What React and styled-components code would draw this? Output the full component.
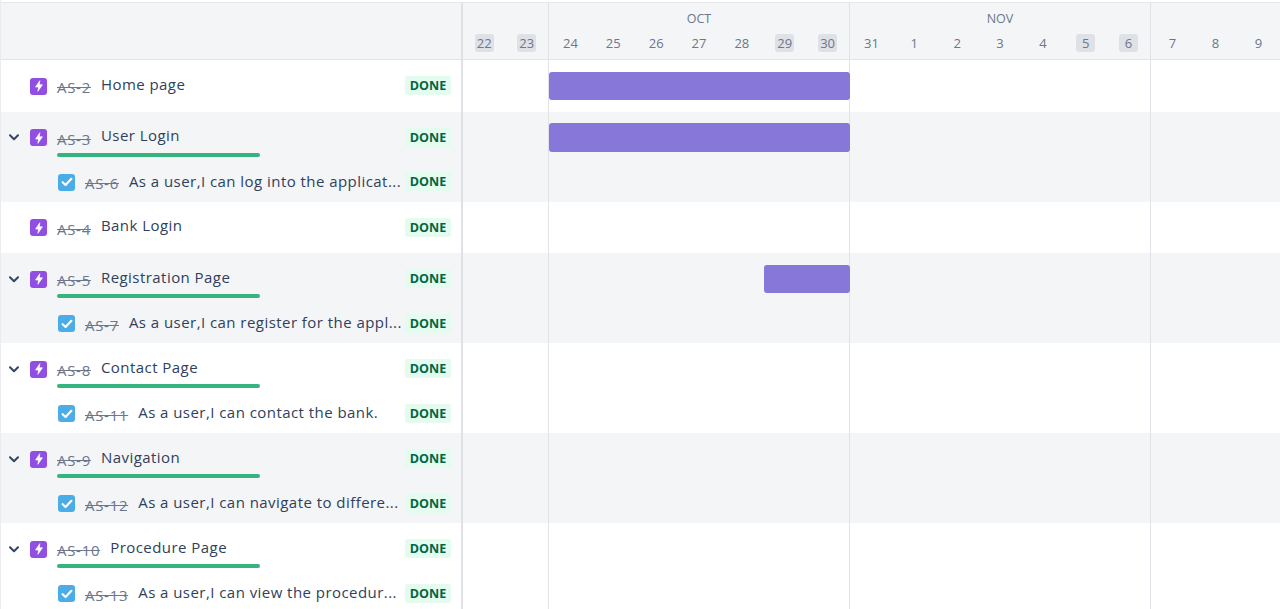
import styled, { createGlobalStyle } from "styled-components";

const months = [
  { label: "", days: [22, 23] },
  { label: "OCT", days: [24, 25, 26, 27, 28, 29, 30] },
  { label: "NOV", days: [31, 1, 2, 3, 4, 5, 6] },
  { label: "", days: [7, 8, 9] },
];
const weekend = [22, 23, 29, 30, 5, 6];

const epics = [
  { id: "AS-2", title: "Home page", bar: { start: 0, days: 7 } },
  {
    id: "AS-3",
    title: "User Login",
    shaded: true,
    bar: { start: 0, days: 7 },
    child: { id: "AS-6", title: "As a user,I can log into the applicat..." },
  },
  { id: "AS-4", title: "Bank Login" },
  {
    id: "AS-5",
    title: "Registration Page",
    shaded: true,
    bar: { start: 5, days: 2 },
    child: { id: "AS-7", title: "As a user,I can register for the appl..." },
  },
  {
    id: "AS-8",
    title: "Contact Page",
    child: { id: "AS-11", title: "As a user,I can contact the bank." },
  },
  {
    id: "AS-9",
    title: "Navigation",
    shaded: true,
    child: { id: "AS-12", title: "As a user,I can navigate to differe..." },
  },
  {
    id: "AS-10",
    title: "Procedure Page",
    child: { id: "AS-13", title: "As a user,I can view the procedur..." },
  },
];

const DAY = 43;

const EpicIcon = () => (
  <EpicBox>
    <svg width="10" height="12" viewBox="0 0 10 12">
      <path d="M5.8 0.7 1.6 7H4.6L3.9 11.3 8.4 4.8H5.3Z" fill="#fff" stroke="#fff" strokeWidth="0.7" strokeLinejoin="round" />
    </svg>
  </EpicBox>
);

const TaskIcon = () => (
  <TaskBox>
    <svg width="12" height="10" viewBox="0 0 12 10">
      <path d="M1.6 5.2 4.6 8 10.4 1.8" fill="none" stroke="#fff" strokeWidth="2.2" strokeLinecap="round" strokeLinejoin="round" />
    </svg>
  </TaskBox>
);

const Chevron = () => (
  <svg width="10" height="7" viewBox="0 0 10 7">
    <path d="M1 1.2 5 5.2 9 1.2" fill="none" stroke="#344563" strokeWidth="2" strokeLinecap="round" strokeLinejoin="round" />
  </svg>
);

const Lines = ({ bar }) => (
  <Lane>
    <WeekCell />
    <WeekCell>
      {bar && <Bar $start={bar.start} $days={bar.days} />}
    </WeekCell>
    <WeekCell />
    <WeekCell $last />
  </Lane>
);

const App = () => (
  <Page>
    <GlobalStyle />
    <Header>
      <SideHead />
      <Lane>
        {months.map((m, i) => (
          <MonthCell key={i} $last={i === months.length - 1}>
            <MonthLabel>{m.label}</MonthLabel>
            <Days>
              {m.days.map((d) => (
                <DaySlot key={d}>
                  <DayNum $weekend={weekend.includes(d)}>{d}</DayNum>
                </DaySlot>
              ))}
            </Days>
          </MonthCell>
        ))}
      </Lane>
    </Header>
    {epics.map((e) => (
      <Group key={e.id} $shaded={e.shaded}>
        <Side>
          <ParentRow>
            <Main>
              <Toggle>{e.child && <Chevron />}</Toggle>
              <EpicIcon />
              <Key>{e.id}</Key>
              <ParentTitle>{e.title}</ParentTitle>
              <Status>DONE</Status>
            </Main>
            {e.child && <Progress />}
          </ParentRow>
          {e.child && (
            <ChildRow>
              <TaskIcon />
              <Key>{e.child.id}</Key>
              <Title>{e.child.title}</Title>
              <Status>DONE</Status>
            </ChildRow>
          )}
        </Side>
        <Lines bar={e.bar} />
      </Group>
    ))}
  </Page>
);

const GlobalStyle = createGlobalStyle`
  html, body {
    margin: 0;
    height: 100%;
    overflow: hidden;
    background: #fff;
    font-family: "Open Sans", "Noto Sans", sans-serif;
  }
`;
const Page = styled.div`
  height: 609px;
  overflow: hidden;
  padding-top: 2px;
  box-sizing: border-box;
  border-left: 1px solid #ebecf0;
`;
const Header = styled.div`
  display: flex;
  height: 58px;
  box-sizing: border-box;
  background: #f4f5f7;
  border-top: 1px solid #e6e8ec;
  border-bottom: 1px solid #e1e3e8;
`;
const SideHead = styled.div`
  width: 460px;
  flex-shrink: 0;
  border-right: 2px solid #dfe1e6;
`;
const Lane = styled.div`
  flex: 1;
  display: grid;
  grid-template-columns: ${DAY * 2}px ${DAY * 7}px ${DAY * 7}px 1fr;
`;
const MonthCell = styled.div`
  display: flex;
  flex-direction: column;
  align-items: center;
  border-right: ${(p) => (p.$last ? "none" : "1px solid #e1e3e8")};
`;
const MonthLabel = styled.div`
  height: 24px;
  padding-top: 7px;
  font-size: 12.5px;
  line-height: 17px;
  color: #6b778c;
`;
const Days = styled.div`
  display: flex;
  width: 100%;
`;
const DaySlot = styled.div`
  width: ${DAY}px;
  display: flex;
  justify-content: center;
`;
const DayNum = styled.span`
  min-width: 19px;
  height: 18px;
  line-height: 18px;
  text-align: center;
  font-size: 13px;
  color: #6b778c;
  border-radius: 3px;
  background: ${(p) => (p.$weekend ? "#dfe1e6" : "transparent")};
`;
const Group = styled.div`
  display: flex;
  background: ${(p) => (p.$shaded ? "#f4f5f7" : "#fff")};
`;
const Side = styled.div`
  width: 460px;
  flex-shrink: 0;
  border-right: 2px solid #dfe1e6;
`;
const ParentRow = styled.div`
  height: 51.5px;
  box-sizing: border-box;
  padding-top: 16px;
`;
const Main = styled.div`
  display: flex;
  align-items: center;
  height: 20px;
  padding: 0 10px 0 8px;
`;
const Toggle = styled.div`
  width: 21px;
  flex-shrink: 0;
  display: flex;
  align-items: center;
`;
const EpicBox = styled.div`
  width: 17px;
  height: 17px;
  flex-shrink: 0;
  margin-right: 10px;
  border-radius: 3px;
  background: #904ee2;
  display: flex;
  align-items: center;
  justify-content: center;
`;
const TaskBox = styled.div`
  width: 17px;
  height: 17px;
  flex-shrink: 0;
  margin-right: 10px;
  border-radius: 3px;
  background: #4bade8;
  display: flex;
  align-items: center;
  justify-content: center;
`;
const Key = styled.span`
  flex-shrink: 0;
  margin-right: 10px;
  font-size: 15px;
  letter-spacing: 0.7px;
  line-height: 20px;
  padding-top: 2px;
  color: #6b778c;
  text-decoration: line-through;
`;
const Title = styled.span`
  flex: 1;
  min-width: 0;
  padding-bottom: 3px;
  font-size: 15px;
  letter-spacing: 0.45px;
  line-height: 20px;
  color: #2f3f5c;
  white-space: nowrap;
`;
const ParentTitle = styled(Title)`
  padding-bottom: 5px;
`;
const Status = styled.span`
  flex-shrink: 0;
  width: 46px;
  height: 19px;
  margin-bottom: 1px;
  line-height: 20px;
  text-align: center;
  border-radius: 3px;
  background: #e3fcef;
  color: #006644;
  font-size: 12.5px;
  font-weight: 700;
`;
const Progress = styled.div`
  width: 203px;
  height: 4px;
  margin: 5px 0 0 56px;
  border-radius: 2px;
  background: #36b37e;
`;
const ChildRow = styled.div`
  display: flex;
  align-items: center;
  height: 38.5px;
  box-sizing: border-box;
  padding: 0 10px 0 57px;
`;
const WeekCell = styled.div`
  border-right: ${(p) => (p.$last ? "none" : "1px solid #e1e3e8")};
`;
const Bar = styled.div`
  height: 28.5px;
  margin-top: 11.5px;
  margin-left: ${(p) => p.$start * DAY}px;
  width: ${(p) => p.$days * DAY}px;
  border-radius: 3px;
  background: #8777d9;
`;

export default App;
